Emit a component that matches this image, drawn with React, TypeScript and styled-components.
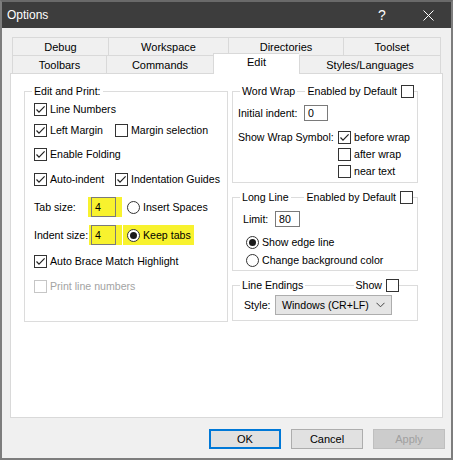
import styled, { createGlobalStyle } from 'styled-components';

const GlobalStyle = createGlobalStyle`
  html, body {
    margin: 0;
    padding: 0;
    background: #ffffff;
  }
  body {
    font-family: "Liberation Sans", Arial, sans-serif;
    font-size: 10.6px;
    color: #000;
  }
`;

const Window = styled.div`
  width: 453px;
  height: 460px;
  box-sizing: border-box;
  border: 2px solid #7d7d7d;
  border-top-color: #6a6a6a;
  background: #f0f0f0;
  display: flex;
  flex-direction: column;
`;

const TitleBar = styled.div`
  height: 26px;
  background: #3d3d3d;
  color: #ffffff;
  display: flex;
  align-items: center;
  padding-left: 5px;
  font-size: 12px;
`;

const Title = styled.div`
  flex: 1;
`;

const CaptionButton = styled.div`
  width: 46px;
  height: 100%;
  display: flex;
  align-items: center;
  justify-content: center;
  font-size: 14px;
`;

const Body = styled.div`
  flex: 1;
  padding: 9px 8px 0 8px;
  display: flex;
  flex-direction: column;
`;

const TabStrip = styled.div`
  margin-left: 2px;
  width: 429px;
  display: flex;
  flex-direction: column;
  font-size: 11px;
`;

const TabRow = styled.div`
  display: flex;
  align-items: flex-start;
  height: 18px;
`;

const Tab = styled.div<{ $w: number; $active?: boolean }>`
  width: ${({ $w }) => $w}px;
  height: ${({ $active }) => ($active ? 21 : 18)}px;
  margin-top: ${({ $active }) => ($active ? -2 : 0)}px;
  box-sizing: border-box;
  border-top: 1px solid #d9d9d9;
  border-left: 1px solid #d9d9d9;
  background: ${({ $active }) => ($active ? '#ffffff' : '#f0f0f0')};
  display: flex;
  align-items: center;
  justify-content: center;
  padding-bottom: ${({ $active }) => ($active ? 4 : 0)}px;
  position: relative;
  z-index: ${({ $active }) => ($active ? 1 : 0)};

  &:last-child {
    border-right: 1px solid #d9d9d9;
  }
`;

const Panel = styled.div`
  height: 345px;
  box-sizing: border-box;
  background: #ffffff;
  border: 1px solid #d9d9d9;
  padding: 10px 13px 0 13px;
  display: flex;
  align-items: flex-start;
  gap: 4px;
`;

const Column = styled.div<{ $w: number }>`
  width: ${({ $w }) => $w}px;
  display: flex;
  flex-direction: column;
`;

const Group = styled.div<{ $mt?: number }>`
  display: flex;
  flex-direction: column;
  margin-top: ${({ $mt }) => $mt ?? 0}px;
`;

const GroupHeader = styled.div`
  display: flex;
  align-items: center;
  height: 14px;
`;

const HeaderLine = styled.div<{ $w?: number; $cap?: 'left' | 'right' }>`
  align-self: flex-end;
  height: 7px;
  box-sizing: border-box;
  border-top: 1px solid #dcdcdc;
  ${({ $w }) => ($w !== undefined ? `width: ${$w}px; flex: none;` : 'flex: 1;')}
  ${({ $cap }) => ($cap === 'left' ? 'border-left: 1px solid #dcdcdc;' : '')}
  ${({ $cap }) => ($cap === 'right' ? 'border-right: 1px solid #dcdcdc;' : '')}
`;

const HeaderText = styled.span<{ $pr?: number }>`
  padding: 0 ${({ $pr }) => $pr ?? 2}px 0 2px;
  white-space: nowrap;
`;

const GroupBody = styled.div<{ $h: number; $pl: number }>`
  height: ${({ $h }) => $h}px;
  box-sizing: border-box;
  border: 1px solid #dcdcdc;
  border-top: none;
  padding-left: ${({ $pl }) => $pl}px;
  display: flex;
  flex-direction: column;
`;

const Row = styled.div<{ $mt: number; $h?: number; $indent?: number }>`
  display: flex;
  align-items: center;
  height: ${({ $h }) => $h ?? 16}px;
  margin-top: ${({ $mt }) => $mt}px;
  padding-left: ${({ $indent }) => $indent ?? 0}px;
  white-space: nowrap;
`;

const Label = styled.span<{ $w: number }>`
  width: ${({ $w }) => $w}px;
  flex: none;
`;

const Item = styled.label<{ $w?: number; $disabled?: boolean; $ml?: number }>`
  display: flex;
  align-items: center;
  gap: 3px;
  ${({ $w }) => ($w ? `width: ${$w}px; flex: none;` : '')}
  margin-left: ${({ $ml }) => $ml ?? 0}px;
  color: ${({ $disabled }) => ($disabled ? '#a3a3a3' : '#000')};
`;

const Box = styled.span<{ $disabled?: boolean }>`
  width: 13px;
  height: 13px;
  flex: none;
  box-sizing: border-box;
  border: 1px solid ${({ $disabled }) => ($disabled ? '#c6c6c6' : '#333333')};
  background: #ffffff;
  display: flex;
  align-items: center;
  justify-content: center;
`;

const RadioCircle = styled.span`
  width: 13px;
  height: 13px;
  flex: none;
  box-sizing: border-box;
  border: 1px solid #333333;
  border-radius: 50%;
  background: #ffffff;
  display: flex;
  align-items: center;
  justify-content: center;
`;

const RadioDot = styled.span`
  width: 7px;
  height: 7px;
  border-radius: 50%;
  background: #1a1a1a;
`;

const Highlight = styled.div<{ $pl: number; $pr: number; $ml?: number }>`
  display: flex;
  align-items: center;
  gap: 3px;
  background: #f8f22e;
  height: 20px;
  padding: 0 ${({ $pr }) => $pr}px 0 ${({ $pl }) => $pl}px;
  margin-left: ${({ $ml }) => $ml ?? 0}px;
`;

const TextBox = styled.div<{ $w: number; $h: number; $yellow?: boolean }>`
  width: ${({ $w }) => $w}px;
  height: ${({ $h }) => $h}px;
  box-sizing: border-box;
  border: 1px solid #7a7a7a;
  background: ${({ $yellow }) => ($yellow ? '#f8f22e' : '#ffffff')};
  padding-left: 3px;
  display: flex;
  align-items: center;
`;

const Select = styled.div`
  width: 117px;
  height: 20px;
  box-sizing: border-box;
  border: 1px solid #adadad;
  background: #e5e5e5;
  padding: 0 6px 0 6px;
  display: flex;
  align-items: center;
  justify-content: space-between;
`;

const ButtonRow = styled.div`
  display: flex;
  justify-content: flex-end;
  gap: 10px;
  margin-top: 11px;
  margin-right: -2px;
  font-size: 11px;
`;

const Button = styled.div<{ $primary?: boolean; $disabled?: boolean }>`
  width: 72px;
  height: 20px;
  box-sizing: border-box;
  display: flex;
  align-items: center;
  justify-content: center;
  border: ${({ $primary, $disabled }) =>
    $primary ? '2px solid #0078d7' : $disabled ? '1px solid #bfbfbf' : '1px solid #adadad'};
  background: ${({ $disabled }) => ($disabled ? '#cccccc' : '#e1e1e1')};
  color: ${({ $disabled }) => ($disabled ? '#a0a0a0' : '#000')};
`;

const Check = ({ checked, disabled }: { checked?: boolean; disabled?: boolean }) => (
  <Box $disabled={disabled}>
    {checked && (
      <svg width="11" height="11" viewBox="0 0 11 11">
        <polyline points="1.5,5.5 4,8.2 9.6,2.4" fill="none" stroke="#222" strokeWidth="1.2" />
      </svg>
    )}
  </Box>
);

const Radio = ({ checked }: { checked?: boolean }) => (
  <RadioCircle>{checked && <RadioDot />}</RadioCircle>
);

const tabsTop = [
  { label: 'Debug', w: 96 },
  { label: 'Workspace', w: 120 },
  { label: 'Directories', w: 115 },
  { label: 'Toolset', w: 98 },
];

const tabsBottom = [
  { label: 'Toolbars', w: 94 },
  { label: 'Commands', w: 107 },
  { label: 'Edit', w: 86, active: true },
  { label: 'Styles/Languages', w: 142 },
];

export default function App() {
  return (
    <>
      <GlobalStyle />
      <Window>
        <TitleBar>
          <Title>Options</Title>
          <CaptionButton>?</CaptionButton>
          <CaptionButton>
            <svg width="11" height="11" viewBox="0 0 11 11">
              <line x1="0.5" y1="0.5" x2="10.5" y2="10.5" stroke="#fff" strokeWidth="1" />
              <line x1="10.5" y1="0.5" x2="0.5" y2="10.5" stroke="#fff" strokeWidth="1" />
            </svg>
          </CaptionButton>
        </TitleBar>

        <Body>
          <TabStrip>
            <TabRow>
              {tabsTop.map(t => (
                <Tab key={t.label} $w={t.w}>{t.label}</Tab>
              ))}
            </TabRow>
            <TabRow>
              {tabsBottom.map(t => (
                <Tab key={t.label} $w={t.w} $active={t.active}>{t.label}</Tab>
              ))}
            </TabRow>
          </TabStrip>

          <Panel>
            {/* Edit and Print */}
            <Column $w={204}>
              <Group>
                <GroupHeader>
                  <HeaderLine $w={8} $cap="left" />
                  <HeaderText>Edit and Print:</HeaderText>
                  <HeaderLine $cap="right" />
                </GroupHeader>
                <GroupBody $h={224} $pl={9}>
                  <Row $mt={3}>
                    <Item><Check checked />Line Numbers</Item>
                  </Row>
                  <Row $mt={5}>
                    <Item $w={81}><Check checked />Left Margin</Item>
                    <Item><Check />Margin selection</Item>
                  </Row>
                  <Row $mt={8}>
                    <Item><Check checked />Enable Folding</Item>
                  </Row>
                  <Row $mt={9}>
                    <Item $w={81}><Check checked />Auto-indent</Item>
                    <Item><Check checked />Indentation Guides</Item>
                  </Row>
                  <Row $mt={10} $h={20}>
                    <Label $w={54}>Tab size:</Label>
                    <Highlight $pl={3} $pr={6}>
                      <TextBox $w={25} $h={20} $yellow>4</TextBox>
                    </Highlight>
                    <Item $ml={5}><Radio />Insert Spaces</Item>
                  </Row>
                  <Row $mt={8} $h={20}>
                    <Label $w={55}>Indent size:</Label>
                    <Highlight $pl={2} $pr={6}>
                      <TextBox $w={25} $h={20} $yellow>4</TextBox>
                    </Highlight>
                    <Highlight $pl={4} $pr={3} $ml={1}>
                      <Radio checked />Keep tabs
                    </Highlight>
                  </Row>
                  <Row $mt={8}>
                    <Item><Check checked />Auto Brace Match Highlight</Item>
                  </Row>
                  <Row $mt={9}>
                    <Item $disabled><Check disabled />Print line numbers</Item>
                  </Row>
                </GroupBody>
              </Group>
            </Column>

            <Column $w={186}>
              {/* Word Wrap */}
              <Group>
                <GroupHeader>
                  <HeaderLine $w={8} $cap="left" />
                  <HeaderText>Word Wrap</HeaderText>
                  <HeaderLine />
                  <HeaderText $pr={4}>Enabled by Default</HeaderText>
                  <Check />
                  <HeaderLine $w={4} $cap="right" />
                </GroupHeader>
                <GroupBody $h={85} $pl={5}>
                  <Row $mt={7}>
                    <Label $w={66}>Initial indent:</Label>
                    <TextBox $w={24} $h={16}>0</TextBox>
                  </Row>
                  <Row $mt={8}>
                    <Label $w={100}>Show Wrap Symbol:</Label>
                    <Item><Check checked />before wrap</Item>
                  </Row>
                  <Row $mt={1} $indent={100}>
                    <Item><Check />after wrap</Item>
                  </Row>
                  <Row $mt={1} $indent={100}>
                    <Item><Check />near text</Item>
                  </Row>
                </GroupBody>
              </Group>

              {/* Long Line */}
              <Group $mt={7}>
                <GroupHeader>
                  <HeaderLine $w={8} $cap="left" />
                  <HeaderText>Long Line</HeaderText>
                  <HeaderLine />
                  <HeaderText $pr={4}>Enabled by Default</HeaderText>
                  <Check />
                  <HeaderLine $w={5} $cap="right" />
                </GroupHeader>
                <GroupBody $h={67} $pl={10}>
                  <Row $mt={7}>
                    <Label $w={32}>Limit:</Label>
                    <TextBox $w={25} $h={16}>80</TextBox>
                  </Row>
                  <Row $mt={7} $indent={3}>
                    <Item><Radio checked />Show edge line</Item>
                  </Row>
                  <Row $mt={2} $indent={3}>
                    <Item><Radio />Change background color</Item>
                  </Row>
                </GroupBody>
              </Group>

              {/* Line Endings */}
              <Group $mt={7}>
                <GroupHeader>
                  <HeaderLine $w={8} $cap="left" />
                  <HeaderText>Line Endings</HeaderText>
                  <HeaderLine />
                  <HeaderText $pr={4}>Show</HeaderText>
                  <Check />
                  <HeaderLine $w={19} $cap="right" />
                </GroupHeader>
                <GroupBody $h={29} $pl={11}>
                  <Row $mt={3} $h={20}>
                    <Label $w={31}>Style:</Label>
                    <Select>
                      <span>Windows (CR+LF)</span>
                      <svg width="9" height="6" viewBox="0 0 9 6">
                        <polyline points="0.5,0.8 4.5,4.8 8.5,0.8" fill="none" stroke="#444" strokeWidth="1" />
                      </svg>
                    </Select>
                  </Row>
                </GroupBody>
              </Group>
            </Column>
          </Panel>

          <ButtonRow>
            <Button $primary>OK</Button>
            <Button>Cancel</Button>
            <Button $disabled>Apply</Button>
          </ButtonRow>
        </Body>
      </Window>
    </>
  );
}
